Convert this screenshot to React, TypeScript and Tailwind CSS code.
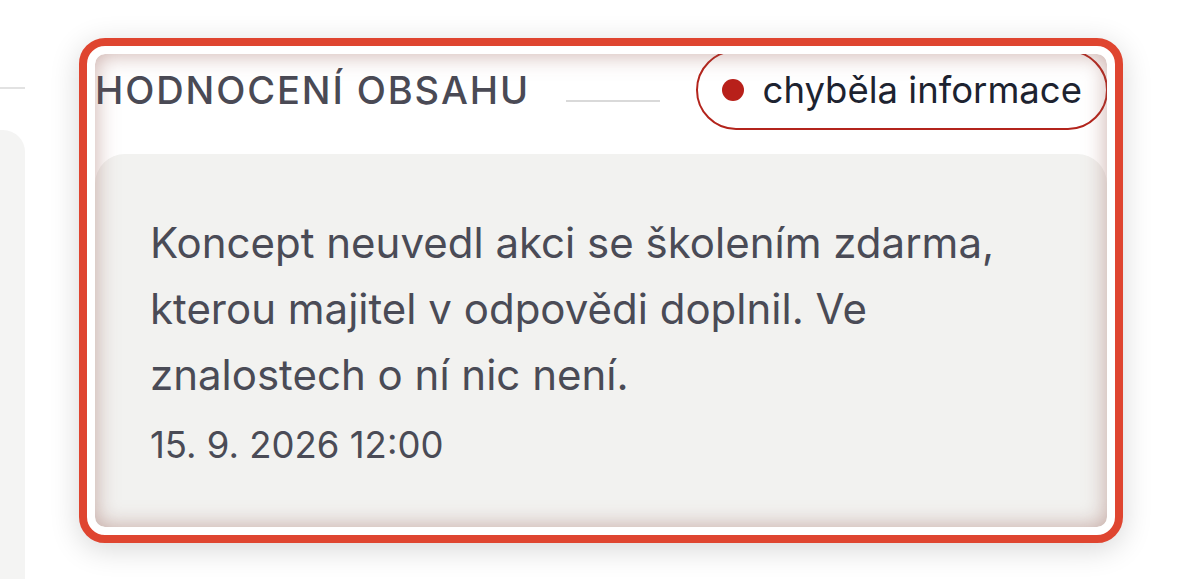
import React from 'react';

const font = { fontFamily: 'Inter, "Noto Sans", sans-serif' };

function SidePeek() {
  return (
    <div className="flex w-[25px] shrink-0 flex-col">
      <div className="mt-[87px] h-[2px] w-full bg-[#e2e2e2]" />
      <div className="mt-[41px] flex-1 rounded-tr-[22px] bg-[#f4f4f3]" />
    </div>
  );
}

function StatusPill({ label }: { label: string }) {
  return (
    <div className="-mr-[1px] flex h-[80px] shrink-0 items-center gap-[19px] rounded-full border-2 border-[#b3241c] bg-white pl-[24px] pr-[24px]">
      <span className="h-[22px] w-[22px] rounded-full bg-[#b8201a]" />
      <span className="text-[36.5px] leading-none text-[#1d2330]">{label}</span>
    </div>
  );
}

export default function App() {
  return (
    <div className="flex h-[579px] w-[1200px] overflow-hidden bg-white" style={font}>
      <SidePeek />

      <div className="ml-[54px] mt-[38px]">
        <div className="h-[505px] w-[1044px] rounded-[26px] border-[8px] border-[#df4530] bg-white p-[8px] shadow-[0_6px_30px_rgba(0,0,0,0.16)]">
          <div className="relative h-full w-full overflow-hidden rounded-[10px] bg-white">
            <div className="flex h-[72px] items-center">
              <h3 className="whitespace-nowrap text-[38px] font-medium uppercase leading-none tracking-[0.05em] text-[#4a4a55]">
                Hodnocení obsahu
              </h3>
              <div className="mx-[36px] mt-[22px] h-[2px] flex-1 bg-[#d9d9d9]" />
              <StatusPill label="chyběla informace" />
            </div>

            <div className="mt-[28px] h-full rounded-t-[30px] bg-[#f2f2f0] px-[55px] pt-[56px] text-[#4a4b56]">
              <p className="text-[42px] leading-[66px]">
                Koncept neuvedl akci se školením zdarma,
                <br />
                kterou majitel v odpovědi doplnil. Ve
                <br />
                znalostech o ní nic není.
              </p>
              <p className="mt-[4px] text-[36.5px] leading-[66px]">15. 9. 2026 12:00</p>
            </div>

            <div className="pointer-events-none absolute inset-0 rounded-[10px] shadow-[inset_0_0_22px_rgba(150,90,80,0.5)]" />
          </div>
        </div>
      </div>
    </div>
  );
}
